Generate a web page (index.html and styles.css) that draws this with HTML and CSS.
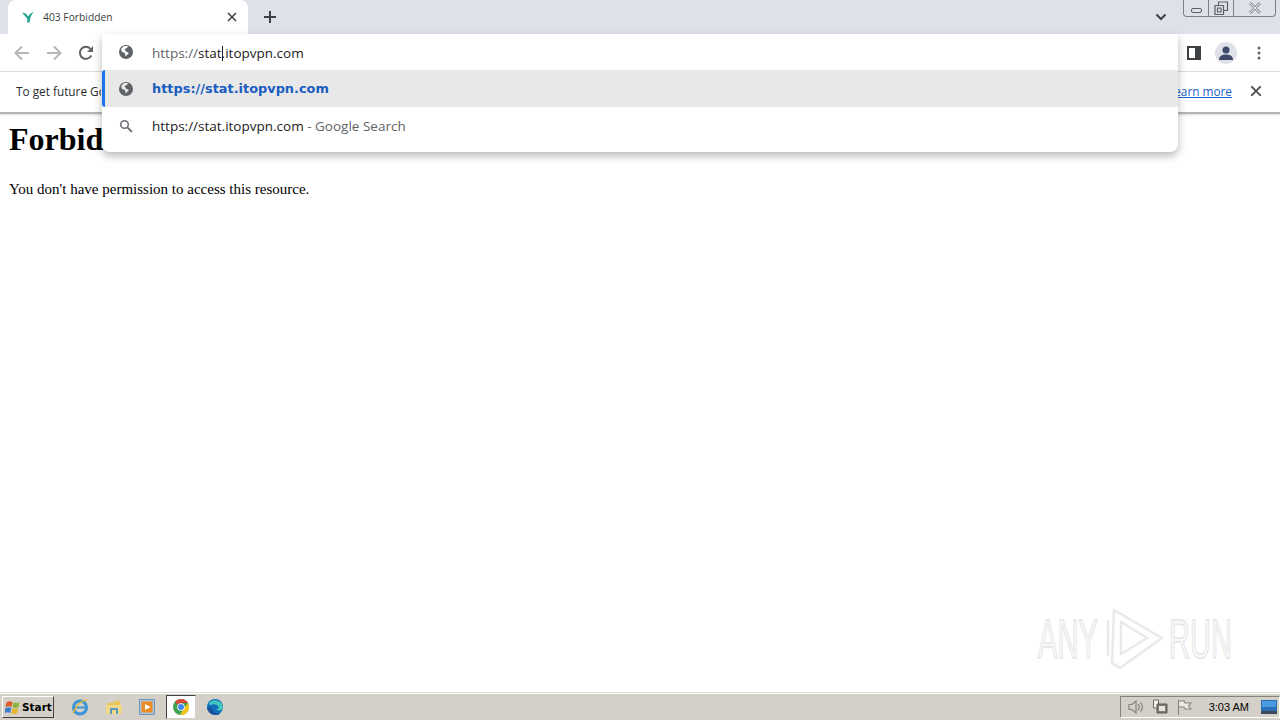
FILE: index.html
```html
<!DOCTYPE html>
<html lang="en">
<head>
<meta charset="utf-8">
<title>403 Forbidden</title>
<link rel="stylesheet" href="styles.css">
</head>
<body>
<div class="screen">
  <div class="browser">
    <div class="tabstrip">
      <div class="tab">
        <svg class="favicon" width="12" height="12" viewBox="0 0 12 12"><path d="M0 1.500l4 1L6 5.500 8 3l3.500-2.500L8.500 6 7.500 11.500H5L5.500 8z" fill="#1fa58c"/></svg>
        <span class="tab-title">403 Forbidden</span>
        <svg class="tab-close" width="10" height="10" viewBox="0 0 10 10"><path d="M1 1l8 8M9 1l-8 8" stroke="#45484c" stroke-width="1.7"/></svg>
      </div>
      <svg class="newtab" width="12" height="12" viewBox="0 0 12 12"><path d="M6 0v12M0 6h12" stroke="#3c4043" stroke-width="2"/></svg>
      <div class="strip-spacer"></div>
      <svg class="tabsearch" width="12" height="8" viewBox="0 0 12 8"><path d="M1.500 1.500L6 6l4.500-4.500" fill="none" stroke="#3c4043" stroke-width="2"/></svg>
      <div class="winctl">
        <div class="wbtn wmin"><span class="min-glyph"></span></div>
        <div class="wbtn wmax">
          <svg width="15" height="14" viewBox="0 0 15 14"><path d="M1 4.500h8.500v9H1zM4.500 4V1h9v8.500h-3.500M3.500 7h3.500v4H3.500z" fill="none" stroke="#5a6068" stroke-width="1.200"/></svg>
        </div>
        <div class="wbtn wclose">
          <svg width="14" height="12" viewBox="0 0 14 12"><path d="M2 1l10 10M12 1L2 11" stroke="#6d737a" stroke-width="2.600"/><path d="M2 1l10 10M12 1L2 11" stroke="#e6e8ec" stroke-width="1.100"/></svg>
        </div>
      </div>
    </div>
    <div class="toolbar">
      <svg class="nav" width="16" height="16" viewBox="0 0 16 16"><path d="M15 8H2M8 1.500L1.500 8 8 14.500" fill="none" stroke="#b4b6b9" stroke-width="2"/></svg>
      <svg class="nav" width="16" height="16" viewBox="0 0 16 16"><path d="M1 8h13M8 1.500L14.500 8 8 14.500" fill="none" stroke="#b4b6b9" stroke-width="2"/></svg>
      <svg class="nav" width="16" height="16" viewBox="0 0 16 16"><path d="M13.300 10.500A6 6 0 1 1 12.400 3.800" fill="none" stroke="#5f6368" stroke-width="2"/><path d="M15 1v6H9z" fill="#5f6368"/></svg>
      <div class="strip-spacer"></div>
      <svg class="sidepanel" width="14" height="14" viewBox="0 0 14 14"><path d="M0 0h14v14H0z" fill="#3c4043"/><path d="M2 2h6v10H2z" fill="#fff"/></svg>
      <div class="avatar"><svg width="16" height="14" viewBox="0 0 16 14"><circle cx="8" cy="4" r="3.500" fill="#3f4a6b"/><path d="M1 14c0-4 3-5.500 7-5.500s7 1.500 7 5.500z" fill="#3f4a6b"/></svg></div>
      <svg class="menu" width="4" height="14" viewBox="0 0 4 14"><circle cx="2" cy="2" r="1.500" fill="#5f6368"/><circle cx="2" cy="7" r="1.500" fill="#5f6368"/><circle cx="2" cy="12" r="1.500" fill="#5f6368"/></svg>
    </div>
    <div class="infobar">
      <span class="info-text">To get future Google Chrome updates</span>
      <div class="strip-spacer"></div>
      <a class="learn" href="#">Learn more</a>
      <svg class="info-close" width="10" height="10" viewBox="0 0 10 10"><path d="M0 0l10 10M10 0L0 10" stroke="#4a4d50" stroke-width="1.800"/></svg>
    </div>
  </div>
  <main class="page">
    <h1>Forbidden</h1>
    <p>You don't have permission to access this resource.</p>
    <div class="watermark">
      <div class="wm-word"><span>ANY</span></div>
      <svg width="58" height="62" viewBox="0 0 58 62"><path d="M8 2l48 28-42 30-8-5zM15 14v32l26-16z" fill="none" stroke="#e9e9e9" stroke-width="2.500"/><path d="M2 12v36" stroke="#e9e9e9" stroke-width="2.500"/></svg>
      <div class="wm-word"><span>RUN</span></div>
    </div>
  </main>
  <footer class="taskbar">
    <div class="start">
      <svg width="16" height="16" viewBox="0 0 16 16"><path d="M1.500 3.500C3.500 2 5.500 2 7.500 3L6.500 8C4.500 7 2.500 7 .500 8.500z" fill="#dd5a2b"/><path d="M8.500 3.200c2 1 4 1 6-.2L13.500 8c-2 1.200-4 1.200-6 .2z" fill="#8cb33c"/><path d="M.300 9.500c2-1.500 4-1.500 6-.5l-1 5c-2-1-4-1-6 .5z" fill="#3d7fcc"/><path d="M7.300 9.200c2 1 4 1 6-.2l-1 5c-2 1.200-4 1.200-6 .2z" fill="#e8b52e"/></svg>
      <span>Start</span>
    </div>
    <div class="quick">
      <svg width="18" height="18" viewBox="0 0 18 18"><circle cx="9" cy="9.500" r="6.500" fill="none" stroke="#3b93d9" stroke-width="3"/><path d="M4 9.500h11" stroke="#3b93d9" stroke-width="2"/><path d="M2 15C5 7 11 2 16 2" fill="none" stroke="#e5b93c" stroke-width="1.500"/></svg>
      <svg width="18" height="18" viewBox="0 0 18 18"><path d="M2 5h6l1-2h6v4H2z" fill="#e9c65a"/><path d="M1 7h16v9H1z" fill="#f1d98c"/><path d="M5 16v-6h8v6h-2v-4H7v4z" fill="#5f9bbd"/></svg>
      <svg width="16" height="18" viewBox="0 0 16 18"><path d="M.500 1.500h15v15H.500z" fill="#a8c4dc" stroke="#6f94b8"/><path d="M2.500 3.500h11v11h-11z" fill="#ee8a22"/><path d="M6 6l5.500 3L6 12z" fill="#fff"/></svg>
      <div class="chrome-btn">
        <svg width="16" height="16" viewBox="0 0 16 16"><circle cx="8" cy="8" r="8" fill="#3ea34e"/><path d="M8 0a8 8 0 0 1 6.930 4H8a4 4 0 0 0-3.500 2L2.200 2.500A8 8 0 0 1 8 0z" fill="#dc4437"/><path d="M14.930 4A8 8 0 0 1 7 15.900L10.500 10z" fill="#f5c518"/><circle cx="8" cy="8" r="3.800" fill="#fff"/><circle cx="8" cy="8" r="3" fill="#4285f4"/></svg>
      </div>
      <svg width="18" height="18" viewBox="0 0 18 18"><circle cx="9" cy="9" r="8" fill="#0f6fb8"/><path d="M3 5a8 8 0 0 1 14 4.500c0 2-2 3-4 3-1.500 0-2.500-.5-3-1 1.500 0 3-1 2.500-2.500C12 7 9 6 6.500 6.500 5 7 3.500 8 3 5z" fill="#41c6c1"/><path d="M1 10c1 4 5 7 9 7 2 0 3.500-.7 4.500-1.500-3 .5-7-.5-8-4C6 9.500 4 9 1 10z" fill="#1c4f9c"/></svg>
    </div>
    <div class="strip-spacer"></div>
    <div class="tray">
      <svg width="16" height="16" viewBox="0 0 16 16"><path d="M1 5.500h3L8 2v12l-4-3.500H1z" fill="none" stroke="#85837c" stroke-width="1.200"/><path d="M10 5c1.500 1.500 1.500 4.500 0 6M12.500 3.500c2.500 2.500 2.500 6.500 0 9" fill="none" stroke="#85837c" stroke-width="1.200"/></svg>
      <svg width="16" height="16" viewBox="0 0 16 16"><path d="M1.500 1h5v8h-5z" fill="#f4f2ec" stroke="#6b6a64"/><path d="M5 5h10v9H5z" fill="#7b7a74" stroke="#5c5b56"/><path d="M7 7h6v5H7z" fill="#e8e6df"/></svg>
      <svg width="16" height="16" viewBox="0 0 16 16"><path d="M2.500 1v15M3 2h5l1 2h6l-2.500 3L15 10H9L8 8H3" fill="#ece9e2" stroke="#85837c" stroke-width="1.100"/></svg>
      <span class="clock">3:03 AM</span>
      <svg width="16" height="14" viewBox="0 0 16 14"><path d="M0 0h16v13H0z" fill="#2a6fb5"/><path d="M1 1h14v6H1z" fill="#4a9ae0"/><path d="M0 11h16v3H0z" fill="#3d4a5c"/></svg>
    </div>
  </footer>
  <div class="omnibox">
    <div class="omni-row omni-input">
      <svg class="globe" width="14" height="14" viewBox="0 0 14 14"><circle cx="7" cy="7" r="7" fill="#5f6368"/><path d="M5 1L2 4l1 3 3 1 .5 3.500L8 10l2-2-3-1.500L5.500 4 8 3l1-2z" fill="#fff"/></svg>
      <span class="url"><span class="muted">https://</span>stat<span class="caret"></span>.itopvpn.com</span>
    </div>
    <div class="omni-row omni-selected">
      <svg class="globe" width="14" height="14" viewBox="0 0 14 14"><circle cx="7" cy="7" r="7" fill="#5f6368"/><path d="M5 1L2 4l1 3 3 1 .5 3.500L8 10l2-2-3-1.500L5.500 4 8 3l1-2z" fill="#e8e8e8"/></svg>
      <span class="match">https://stat.itopvpn.com</span>
    </div>
    <div class="omni-row omni-search">
      <svg class="globe" width="14" height="14" viewBox="0 0 14 14"><circle cx="5.500" cy="5.500" r="3.800" fill="none" stroke="#6f7377" stroke-width="1.600"/><path d="M8.500 8.500L13 13" stroke="#6f7377" stroke-width="1.800"/></svg>
      <span class="url">https://stat.itopvpn.com<span class="suffix"> - Google Search</span></span>
    </div>
  </div>
</div>
</body>
</html>
```
FILE: styles.css
```css
html, body { margin: 0; padding: 0; }
body { background: #fff; overflow: hidden; }
.screen { position: relative; width: 1280px; height: 720px; display: flex; flex-direction: column; overflow: hidden; font-family: "Open Sans", sans-serif; }
.strip-spacer { flex: 1; }
.browser { flex: none; }
.tabstrip { height: 34px; background: #dee1e9; display: flex; align-items: center; }
.tab { width: 240px; height: 34px; margin-left: 8px; background: #fff; border-radius: 8px 8px 0 0; display: flex; align-items: center; box-sizing: border-box; padding: 0 11px 0 14px; }
.favicon { margin-right: 9px; flex: none; }
.tab-title { flex: 1; font-size: 10.300px; color: #3c4043; }
.newtab { margin-left: 16px; }
.tabsearch { margin-right: 16px; }
.winctl { align-self: flex-start; display: flex; height: 16px; margin-right: 4px; border: 1px solid #7c8087; border-top: 0; border-radius: 0 0 4px 4px; }
.wbtn { display: flex; align-items: center; justify-content: center; height: 16px; }
.wmin { width: 24px; border-right: 1px solid #7c8087; }
.wmax { width: 24px; border-right: 1px solid #7c8087; }
.wclose { width: 41px; }
.min-glyph { display: block; width: 9px; height: 3px; border: 1px solid #5a6068; border-radius: 2px; margin-top: 4px; }
.toolbar { height: 38px; background: #fff; display: flex; align-items: center; padding-left: 14px; border-bottom: 1px solid #dadce0; box-sizing: border-box; }
.nav { margin-right: 16px; }
.sidepanel { margin-right: 14px; }
.avatar { width: 22px; height: 22px; border-radius: 50%; background: #dee1e9; display: flex; align-items: center; justify-content: center; margin-right: 20px; }
.menu { margin-right: 19px; }
.infobar { height: 42px; background: #fff; display: flex; align-items: center; padding: 0 19px 2px 16px; border-bottom: 2px solid #b5b5b5; box-sizing: border-box; font-size: 11.800px; color: #2a2c2f; box-shadow: 0 1px 2px rgba(0,0,0,.15); position: relative; }
.info-text { width: 85px; overflow: hidden; white-space: nowrap; }
.learn { color: #1a62c9; margin-right: 19px; }
.page { flex: 1; position: relative; font-family: "Liberation Serif", serif; color: #000; padding: 7px 9px 0; }
.page h1 { margin: 0 0 22px; font-size: 32px; line-height: 37px; }
.page p { margin: 0; font-size: 15px; line-height: 18px; }
.watermark { position: absolute; right: 48px; bottom: 22px; display: flex; align-items: center; gap: 5px; font-family: "Liberation Sans", sans-serif; font-size: 56px; line-height: 60px; color: #f9f9f9; -webkit-text-stroke: 1.500px #e6e6e6; }
.wm-word { width: 63px; height: 60px; white-space: nowrap; }
.wm-word span { display: inline-block; transform: scaleX(.52); transform-origin: left center; }
.taskbar { height: 28px; flex: none; background: #d4d0c8; border-top: 1px solid #dedcd6; box-sizing: border-box; display: flex; align-items: center; box-shadow: inset 0 1px 0 #fff; }
.start { display: flex; align-items: center; gap: 1px; margin-left: 2px; width: 52px; height: 22px; box-sizing: border-box; padding-left: 2px; border: 1px solid; border-color: #fff #404040 #404040 #fff; font-family: "DejaVu Sans", sans-serif; font-weight: bold; font-size: 10.500px; color: #000; }
.quick { display: flex; align-items: center; gap: 16px; margin-left: 17px; }
.chrome-btn { width: 30px; height: 24px; background: #fff; border: 1px solid; border-color: #404040 #d4d0c8 #d4d0c8 #404040; box-sizing: border-box; display: flex; align-items: center; justify-content: center; margin: 0 -6px 0 -5px; }
.tray { display: flex; align-items: center; height: 22px; gap: 8px; border: 1px solid; border-color: #85837c #fff #fff #85837c; padding: 0 2px 0 7px; box-sizing: border-box; font-family: "Liberation Sans", sans-serif; font-size: 11px; color: #000; }
.clock { margin: 0 4px 0 9px; }
.omnibox { position: absolute; left: 102px; top: 34px; width: 1076px; height: 118px; background: #fff; border-radius: 0 0 8px 8px; box-shadow: 0 4px 8px rgba(0,0,0,.28); font-size: 13.500px; color: #202124; }
.omni-row { height: 37px; display: flex; align-items: center; padding-left: 17px; box-sizing: border-box; }
.omni-input { height: 36px; padding-top: 1px; }
.omni-input .globe { margin-bottom: 2px; }
.omni-selected { background: #e8e8e8; border-left: 3px solid #1a73e8; padding-left: 14px; height: 37px; border-radius: 3px 0 0 3px; }
.globe { flex: none; margin-right: 19px; }
.muted { color: #5f6368; }
.caret { display: inline-block; width: 1px; height: 15px; background: #202124; vertical-align: -3px; margin-right: -1px; }
.match { font-family: "DejaVu Sans", sans-serif; font-weight: bold; font-size: 12.900px; color: #1a5dc0; }
.suffix { color: #5f6368; }
```
